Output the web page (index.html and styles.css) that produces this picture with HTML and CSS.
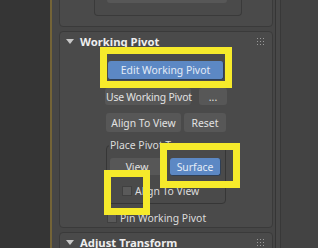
FILE: index.html
```html
<!DOCTYPE html>
<html>
<head>
<meta charset="utf-8">
<link rel="stylesheet" href="styles.css">
</head>
<body>
<div class="app">
  <div class="viewport"></div>
  <div class="divider"></div>
  <div class="panel">
    <div class="rollout prev">
      <div class="group prev-group">
        <div class="btn reset-pivot">Reset Pivot</div>
      </div>
    </div>
    <div class="rollout wp">
      <div class="header">
        <span class="tri"></span>
        <span class="title">Working Pivot</span>
        <span class="grip"><i></i><i></i><i></i><i></i><i></i><i></i><i></i><i></i><i></i></span>
      </div>
      <div class="row r-edit"><div class="btn blue edit">Edit Working Pivot</div></div>
      <div class="row r-use"><div class="btn use">Use Working Pivot</div><div class="btn dots">...</div></div>
      <div class="row r-align"><div class="btn align">Align To View</div><div class="btn reset">Reset</div></div>
      <div class="group place">
        <span class="legend">Place Pivot To:</span>
        <div class="row r-vs"><div class="btn view">View</div><div class="btn blue surface">Surface</div></div>
        <div class="check c-align"><span class="box"></span><span>Align To View</span></div>
      </div>
      <div class="check c-pin"><span class="box"></span><span>Pin Working Pivot</span></div>
      <div class="hl hl1"></div>
      <div class="hl hl2"></div>
      <div class="hl hl3"></div>
    </div>
    <div class="rollout adj">
      <div class="header">
        <span class="tri"></span>
        <span class="title">Adjust Transform</span>
        <span class="grip"><i></i><i></i><i></i><i></i><i></i><i></i><i></i><i></i><i></i></span>
      </div>
    </div>
  </div>
  <div class="sidebar"></div>
</div>
</body>
</html>
```
FILE: styles.css
```css
html, body { margin: 0; padding: 0; }
body {
  width: 318px; height: 248px; overflow: hidden;
  background: #444;
  font-family: "Noto Sans", "Open Sans", sans-serif;
  font-size: 10.4px;
  color: #dcdcdc;
}
.app { display: flex; height: 248px; overflow: hidden; }
.viewport { width: 50px; background: #353535; flex: none; }
.divider { width: 2px; background: #746437; flex: none; }
.panel {
  width: 224px; flex: none; background: #464646;
  padding-left: 7px; box-sizing: border-box;
  border-right: 1px solid #353535;
}
.sidebar {
  flex: 1; background: #434343;
  border-left: 1px solid #383838;
  margin-left: 4px;
  box-shadow: -4px 0 0 #484848;
}
.rollout {
  width: 214px; box-sizing: border-box;
  background: #4a4a4a;
  border: 1px solid #3a3a3a;
  border-radius: 4px;
  position: relative;
}
.prev { margin-top: -40px; height: 67px; }
.prev-group {
  margin-left: 34px; width: 148px; height: 55px; box-sizing: border-box;
  border: 1px solid #3a3a3a; border-top: none; border-radius: 0 0 4px 4px;
  padding-top: 24px; padding-left: 12px;
}
.reset-pivot { width: 120px; height: 20px; }
.wp { margin-top: 4px; height: 197px; }
.adj { margin-top: 4px; height: 40px; }
.header {
  height: 19px; display: flex; align-items: center; position: relative;
}
.tri {
  width: 0; height: 0; margin-left: 6px; margin-top: -1px;
  border-left: 4px solid transparent; border-right: 4px solid transparent;
  border-top: 5px solid #c8c8c8;
}
.title {
  margin-left: 6px; font-weight: bold; font-size: 11.3px; color: #eee;
  margin-top: -1px;
}
.grip {
  margin-left: auto; margin-right: 8px; width: 7px; height: 7px;
  display: grid; grid-template-columns: repeat(3, 1px); gap: 2px 2px;
}
.grip i { width: 1px; height: 1px; background: #9a9a9a; display: block; }
.row { display: flex; }
.btn {
  height: 18px; box-sizing: border-box;
  background: #575757; border-radius: 3px;
  display: flex; align-items: center; justify-content: center;
  color: #e2e2e2; white-space: nowrap;
}
.blue {
  background: #5c88c4; color: #e4ecf7; border-bottom: 1px solid #2f3f55;
  border-right: 1px solid #2f3f55;
}
.r-edit { margin-top: 10px; margin-left: 48px; }
.edit { width: 116px; height: 19px; }
.r-use { margin-top: 8px; margin-left: 45px; }
.use { width: 86px; height: 17px; justify-content: flex-start; padding-left: 1px; letter-spacing: -0.2px; }
.dots { width: 28px; height: 17px; margin-left: 8px; }
.r-align { margin-top: 8px; margin-left: 46px; }
.align { width: 75px; height: 19px; }
.reset { width: 42px; height: 19px; margin-left: 3px; }
.place {
  margin-top: 13px; margin-left: 46px; width: 120px; height: 59px;
  box-sizing: border-box; border: 1px solid #363636; border-radius: 4px;
  padding-left: 3px;
}
.legend {
  display: inline-block; margin-top: -8px; margin-left: -1px; padding: 0 1px;
  background: #4a4a4a; line-height: 14px; height: 14px; vertical-align: top;
}
.r-vs { margin-top: -2px; }
.view { width: 54px; height: 17px; }
.surface { width: 51px; height: 18px; margin-left: 6px; }
.check { display: flex; align-items: center; height: 12px; }
.box {
  width: 10px; height: 10px; background: #5a5a5a; border: 1px solid #404040;
  box-sizing: border-box; margin-right: 3px;
}
.c-align { margin-top: 9px; margin-left: 12px; }
.c-pin { margin-top: 8px; margin-left: 47px; }
.hl {
  position: absolute; border: 7px solid #f6ea2b; box-sizing: border-box;
}
.hl1 { left: 40px; top: 15px; width: 132px; height: 41px; }
.hl2 { left: 100px; top: 111px; width: 80px; height: 45px; }
.hl3 { left: 44px; top: 138px; width: 46px; height: 45px; }
```
